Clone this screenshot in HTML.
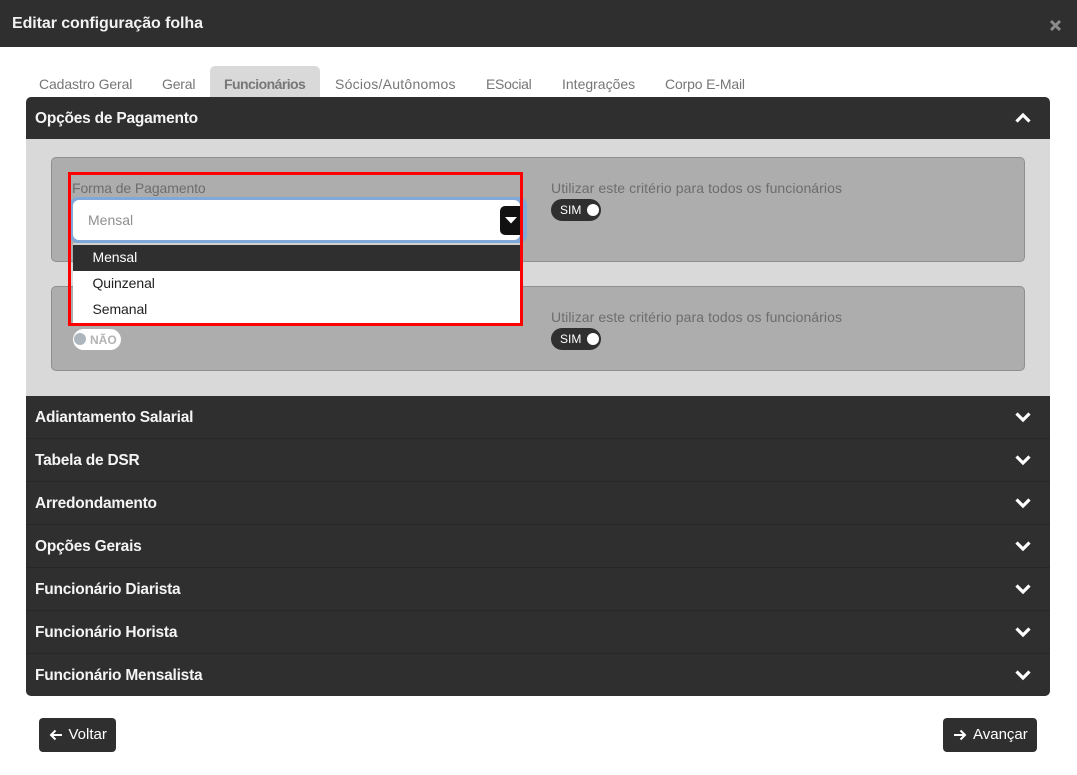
<!DOCTYPE html>
<html lang="pt">
<head>
<meta charset="utf-8">
<style>
html,body{margin:0;padding:0;background:#fff}
body{width:1077px;height:775px;position:relative;overflow:hidden;font-family:"Liberation Sans",sans-serif}
div,span,svg{position:absolute;box-sizing:border-box}
.t{white-space:nowrap;line-height:20px}
.tab{top:74px;font-size:14px;color:#767676}
.hd{left:26px;width:1024px;height:43px;background:#2f2f2f;border-bottom:1px solid #272727}
.hl{left:35px;font-size:15.5px;letter-spacing:-.22px;font-weight:bold;color:#f4f4f4}
.box{left:51px;width:974px;background:#adadad;border:1px solid #8f8f8f;border-radius:5px}
.lb{font-size:14px;color:#6d6d6d}
.sim{left:551px;width:50px;height:22px;background:#2f2f2f;border-radius:11px}
.sim i{position:absolute;left:36px;top:5px;width:12px;height:12px;background:#fff;border-radius:50%}
.sim b{position:absolute;left:9px;top:4px;font-size:12px;line-height:14px;font-weight:normal;color:#fff}
.opt{left:73px;width:447px;height:26px;font-size:14px;line-height:24px;padding-left:19.5px;letter-spacing:-.08px;color:#222;background:#fff}
.btn{top:718px;height:34px;background:#2f2f2f;border-radius:4px}
</style>
</head>
<body>
<div style="left:0;top:0;width:1077px;height:47px;background:#2f2f2f"></div>
<div class="t" style="left:12px;top:14px;font-size:16px;letter-spacing:-.08px;font-weight:bold;color:#f2f2f2">Editar configuração folha</div>
<svg style="left:1049px;top:19px" width="13" height="13" viewBox="0 0 13 13"><path d="M2 2L11 11M11 2L2 11" stroke="#8b8b8b" stroke-width="3"/></svg>

<div style="left:210px;top:66px;width:110px;height:34px;background:#d9d9d9;border-radius:5px 5px 0 0"></div>
<div class="t tab" style="left:39px;letter-spacing:-.12px">Cadastro Geral</div>
<div class="t tab" style="left:162px;letter-spacing:-.2px">Geral</div>
<div class="t tab" style="left:224px;font-weight:bold;color:#777;letter-spacing:-.55px">Funcionários</div>
<div class="t tab" style="left:335px;letter-spacing:.25px">Sócios/Autônomos</div>
<div class="t tab" style="left:486px;letter-spacing:-.28px">ESocial</div>
<div class="t tab" style="left:562px">Integrações</div>
<div class="t tab" style="left:665px;letter-spacing:-.15px">Corpo E-Mail</div>

<div class="hd" style="top:97px;height:42px;border-radius:5px 5px 0 0;border:0"></div>
<div class="t hl" style="top:109px">Opções de Pagamento</div>
<svg style="left:1014px;top:111px" width="18" height="14" viewBox="0 0 18 14"><path d="M2.5 10.5L9 4L15.500 10.500" fill="none" stroke="#fff" stroke-width="3.200"/></svg>

<div style="left:26px;top:139px;width:1024px;height:257px;background:#d9d9d9"></div>
<div class="box" style="top:157px;height:105px"></div>
<div class="box" style="top:286px;height:85px"></div>

<div class="t lb" style="left:551px;top:178px;letter-spacing:.08px">Utilizar este critério para todos os funcionários</div>
<div class="sim" style="top:199px"><b>SIM</b><i></i></div>
<div class="t lb" style="left:551px;top:307px;letter-spacing:.08px">Utilizar este critério para todos os funcionários</div>
<div class="sim" style="top:328px"><b>SIM</b><i></i></div>

<div style="left:73px;top:329px;width:48px;height:21px;background:#fff;border-radius:11px"></div>
<div style="left:74px;top:333px;width:12px;height:12px;background:#adb5bd;border-radius:50%"></div>
<div class="t" style="left:90px;top:330px;font-size:12px;font-weight:bold;color:#b3b3b3;line-height:21px">NÃO</div>

<div class="t lb" style="left:72px;top:178px;letter-spacing:-.1px">Forma de Pagamento</div>
<div style="left:70px;top:197px;width:457px;height:46px;background:#80a9d8;border-radius:8px"></div>
<div style="left:73px;top:200px;width:447px;height:40px;background:#fff;border-radius:6px"></div>
<div class="t" style="left:88px;top:210px;font-size:14px;color:#8f8f8f">Mensal</div>
<div style="left:500px;top:206px;width:20px;height:29px;background:#111;border-radius:5px 0 0 5px"></div>
<svg style="left:505px;top:217px" width="12" height="7" viewBox="0 0 12 7"><path d="M0 0H12L6 6.500Z" fill="#fff"/></svg>

<div style="left:73px;top:243px;width:447px;height:2px;background:#d0d0d0"></div>
<div class="opt" style="top:245px;background:#2f2f2f;color:#fff">Mensal</div>
<div class="opt" style="top:271px">Quinzenal</div>
<div class="opt" style="top:297px">Semanal</div>
<div style="left:68px;top:172px;width:455px;height:154px;border:3px solid #f00"></div>

<div class="hd" style="top:396px"></div>
<div class="hd" style="top:439px"></div>
<div class="hd" style="top:482px"></div>
<div class="hd" style="top:525px"></div>
<div class="hd" style="top:568px"></div>
<div class="hd" style="top:611px"></div>
<div class="hd" style="top:654px;height:42px;border:0;border-radius:0 0 5px 5px"></div>

<div class="t hl" style="top:408px">Adiantamento Salarial</div>
<div class="t hl" style="top:451px">Tabela de DSR</div>
<div class="t hl" style="top:494px">Arredondamento</div>
<div class="t hl" style="top:537px">Opções Gerais</div>
<div class="t hl" style="top:580px">Funcionário Diarista</div>
<div class="t hl" style="top:623px">Funcionário Horista</div>
<div class="t hl" style="top:666px">Funcionário Mensalista</div>

<svg style="left:1014px;top:409.500px" width="18" height="14" viewBox="0 0 18 14"><path d="M2.500 3.500L9 10L15.500 3.500" fill="none" stroke="#fff" stroke-width="3.200"/></svg>
<svg style="left:1014px;top:452.500px" width="18" height="14" viewBox="0 0 18 14"><path d="M2.500 3.500L9 10L15.500 3.500" fill="none" stroke="#fff" stroke-width="3.200"/></svg>
<svg style="left:1014px;top:495.500px" width="18" height="14" viewBox="0 0 18 14"><path d="M2.500 3.500L9 10L15.500 3.500" fill="none" stroke="#fff" stroke-width="3.200"/></svg>
<svg style="left:1014px;top:538.500px" width="18" height="14" viewBox="0 0 18 14"><path d="M2.500 3.500L9 10L15.500 3.500" fill="none" stroke="#fff" stroke-width="3.200"/></svg>
<svg style="left:1014px;top:581.500px" width="18" height="14" viewBox="0 0 18 14"><path d="M2.500 3.500L9 10L15.500 3.500" fill="none" stroke="#fff" stroke-width="3.200"/></svg>
<svg style="left:1014px;top:624.500px" width="18" height="14" viewBox="0 0 18 14"><path d="M2.500 3.500L9 10L15.500 3.500" fill="none" stroke="#fff" stroke-width="3.200"/></svg>
<svg style="left:1014px;top:667.500px" width="18" height="14" viewBox="0 0 18 14"><path d="M2.500 3.500L9 10L15.500 3.500" fill="none" stroke="#fff" stroke-width="3.200"/></svg>

<div class="btn" style="left:39px;width:77px"></div>
<svg style="left:49px;top:729px" width="14" height="12" viewBox="0 0 14 12"><path d="M13 6H2M6.500 1.500L2 6L6.500 10.500" fill="none" stroke="#fff" stroke-width="2"/></svg>
<div class="t" style="left:68.500px;top:725px;font-size:15px;color:#fff">Voltar</div>
<div class="btn" style="left:943px;width:94px"></div>
<svg style="left:953px;top:729px" width="14" height="12" viewBox="0 0 14 12"><path d="M1 6H12M7.500 1.500L12 6L7.500 10.500" fill="none" stroke="#fff" stroke-width="2"/></svg>
<div class="t" style="left:973px;top:725px;font-size:15px;color:#fff">Avançar</div>
</body>
</html>
